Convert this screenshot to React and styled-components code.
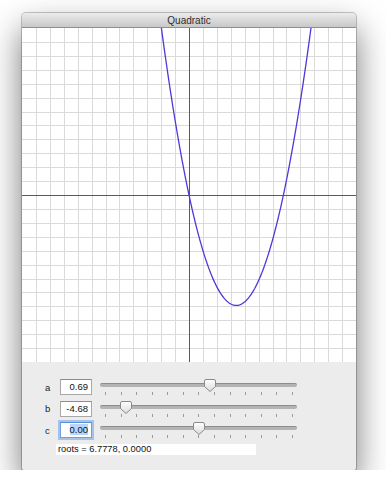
import React from "react";
import styled, { createGlobalStyle } from "styled-components";

const GlobalStyle = createGlobalStyle`
  body {
    margin: 0;
    background: #fff;
    font-family: "Liberation Sans", Arial, sans-serif;
  }
`;

const Stage = styled.div`
  padding: 13px 0 0 22px;
`;

const Window = styled.div`
  width: 334px;
  background: #ececec;
  border-radius: 4px 4px 2px 2px;
  box-shadow: 0 16px 34px rgba(0, 0, 0, 0.55), 0 0 0 1px rgba(0, 0, 0, 0.22);
  overflow: hidden;
`;

const TitleBar = styled.div`
  height: 14px;
  border-bottom: 1px solid #8e8e8e;
  background: linear-gradient(#ececec, #d6d6d6 60%, #c9c9c9);
  color: #2e2e2e;
  font-size: 10px;
  line-height: 15px;
  text-align: center;
`;

const Plot = styled.svg`
  display: block;
  background: #fff;
`;

const Panel = styled.div`
  padding: 17px 0 15px 23px;
  display: flex;
  flex-direction: column;
  gap: 5.5px;
`;

const Row = styled.div`
  display: flex;
  align-items: center;
  height: 16px;
`;

const Label = styled.div`
  width: 15px;
  font-size: 9.5px;
  color: #222;
`;

const Field = styled.div`
  box-sizing: border-box;
  width: 32px;
  height: 16px;
  margin-right: 8px;
  background: #fff;
  border: 1px solid ${(p) => (p.focused ? "#6f9fe0" : "#a8a8a8")};
  border-top-color: ${(p) => (p.focused ? "#5b8ed8" : "#8c8c8c")};
  box-shadow: ${(p) => (p.focused ? "0 0 0 2px rgba(110, 160, 230, 0.55)" : "none")};
  font-size: 9.5px;
  line-height: 14px;
  text-align: right;
  padding-right: 3px;
  color: #111;
`;

const Selection = styled.span`
  background: #b7d4fb;
`;

const Slider = styled.div`
  position: relative;
  width: 197px;
  height: 16px;
`;

const Track = styled.div`
  margin-top: 4px;
  height: 3px;
  border-radius: 2px;
  background: #b4b4b4;
  border-top: 1px solid #8d8d8d;
`;

const Ticks = styled.div`
  display: flex;
  justify-content: space-between;
  padding: 0 4px 0 5px;
  margin-top: 5px;
`;

const Tick = styled.div`
  width: 1px;
  height: 3px;
  background: #9a9a9a;
`;

const Thumb = styled.svg`
  position: absolute;
  top: 0;
`;

const Roots = styled.div`
  margin: 0.5px 0 0 11px;
  width: 198px;
  height: 11px;
  padding-left: 2px;
  background: #fff;
  font-size: 9.3px;
  line-height: 11px;
  color: #111;
`;

const W = 334;
const H = 334;
const sx = (x) => ((x + 12) * W) / 24;
const sy = (y) => ((12 - y) * H) / 24;

const Graph = ({ a, b, c }) => {
  const grid = [];
  for (let i = -11; i <= 11; i++) {
    if (i === 0) continue;
    const x = Math.round(sx(i)) + 0.5;
    const y = Math.round(sy(i)) + 0.5;
    grid.push(<line key={"v" + i} x1={x} y1={0} x2={x} y2={H} stroke="#dadada" />);
    grid.push(<line key={"h" + i} x1={0} y1={y} x2={W} y2={y} stroke="#dadada" />);
  }
  const ox = Math.round(sx(0)) + 0.5;
  const oy = Math.round(sy(0)) + 0.5;
  const pts = [];
  for (let x = -12; x <= 12.001; x += 0.04) {
    const y = a * x * x + b * x + c;
    if (y > 14 || y < -14) continue;
    pts.push(sx(x).toFixed(2) + "," + sy(y).toFixed(2));
  }
  return (
    <Plot width={W} height={H}>
      {grid}
      <line x1={ox} y1={0} x2={ox} y2={H} stroke="#5a5a5a" />
      <line x1={0} y1={oy} x2={W} y2={oy} stroke="#5a5a5a" />
      <polyline points={pts.join(" ")} fill="none" stroke="#5236d8" strokeWidth="1.3" />
    </Plot>
  );
};

const SliderControl = ({ value }) => {
  const center = 5 + ((value + 6) / 12) * 188;
  return (
    <Slider>
      <Track />
      <Ticks>
        {Array.from({ length: 13 }).map((_, i) => (
          <Tick key={i} />
        ))}
      </Ticks>
      <Thumb width="12" height="14" viewBox="0 0 12 14" style={{ left: center - 6 }}>
        <defs>
          <linearGradient id="tg" x1="0" y1="0" x2="0" y2="1">
            <stop offset="0" stopColor="#ffffff" />
            <stop offset="1" stopColor="#dcdcdc" />
          </linearGradient>
        </defs>
        <path
          d="M2 0.5 H10 Q11.5 0.5 11.5 2 V7.5 L6 12.5 L0.5 7.5 V2 Q0.5 0.5 2 0.5 Z"
          fill="url(#tg)"
          stroke="#8a8a8a"
        />
      </Thumb>
    </Slider>
  );
};

const params = [
  { name: "a", value: 0.69 },
  { name: "b", value: -4.68 },
  { name: "c", value: 0.0, focused: true },
];

export default function App() {
  return (
    <>
      <GlobalStyle />
      <Stage>
        <Window>
          <TitleBar>Quadratic</TitleBar>
          <Graph a={0.69} b={-4.68} c={0} />
          <Panel>
            {params.map((p) => (
              <Row key={p.name}>
                <Label>{p.name}</Label>
                <Field focused={p.focused}>
                  {p.focused ? <Selection>{p.value.toFixed(2)}</Selection> : p.value.toFixed(2)}
                </Field>
                <SliderControl value={p.value} />
              </Row>
            ))}
            <Roots>roots = 6.7778, 0.0000</Roots>
          </Panel>
        </Window>
      </Stage>
    </>
  );
}
